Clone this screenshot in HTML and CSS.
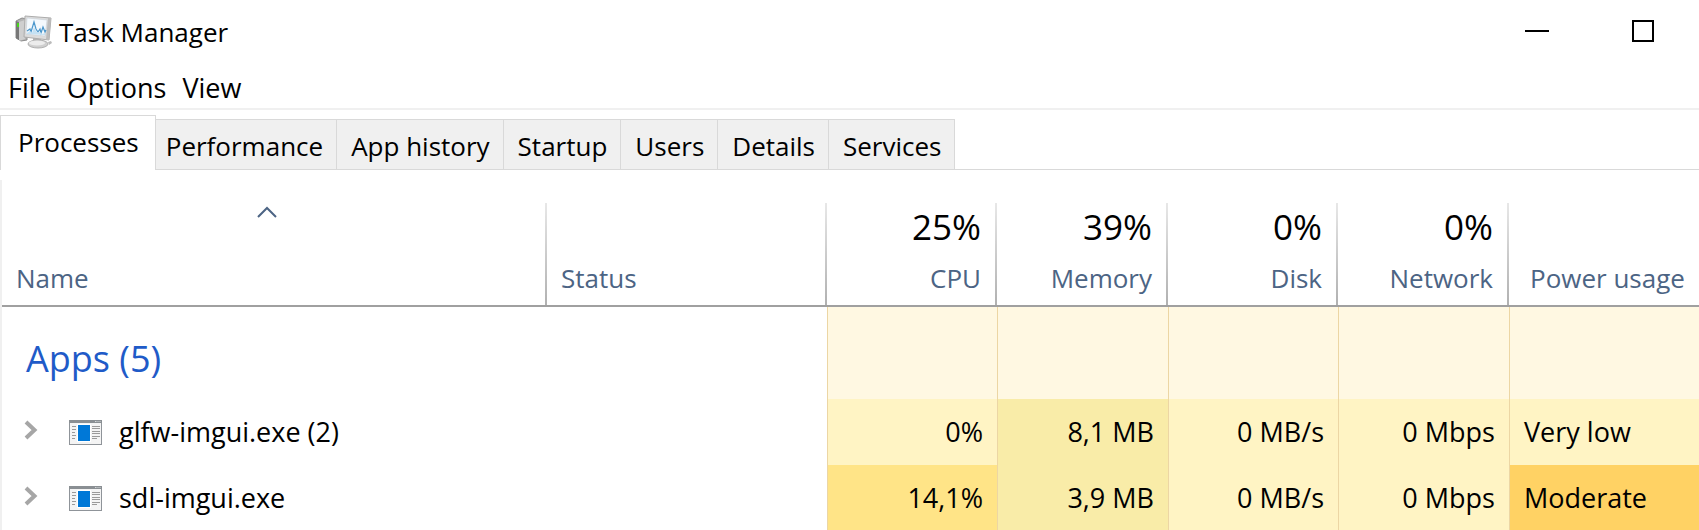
FILE: index.html
```html
<!DOCTYPE html>
<html lang="en">
<head>
<meta charset="utf-8">
<title>Task Manager</title>
<link rel="stylesheet" href="styles.css">
</head>
<body>
<svg class="defs" aria-hidden="true">
  <symbol id="app-icon" viewBox="0 0 33 25">
    <rect x="0.5" y="0.5" width="32" height="24" fill="#f4f4f4" stroke="#8f9499"/>
    <rect x="0" y="0" width="33" height="3" fill="#8a8f93"/>
    <path d="M26 1.5h1.500M28.500 1.500h1M30.500 1.500h1" stroke="#d5d8da"/>
    <rect x="8" y="4" width="14" height="18" fill="#fff"/>
    <rect x="9" y="5" width="12" height="16" fill="#0078d7"/>
    <path d="M3 6.500h4M3 9.500h4M3 12.500h3M3 15.500h4M3 18.500h3M23 6.500h8M23 8.500h8M23 11.500h8M23 13.500h8M23 16.500h8M23 18.500h5" stroke="#9a9a9a"/>
  </symbol>
  <symbol id="chevron" viewBox="0 0 14 20">
    <path d="M2 2l8.500 8L2 18" fill="none" stroke="#a6a6a6" stroke-width="4"/>
  </symbol>
</svg>
<header class="titlebar">
  <svg class="logo" viewBox="0 0 38 34" aria-hidden="true">
    <path d="M1 6l6-3 5 1v21l-6 1-5-3z" fill="#b5b5b5" stroke="#8c8c8c"/>
    <path d="M1 6l3 1v18l-3-2z" fill="#777"/>
    <path d="M4 7l6-2v19l-6 2z" fill="#cfcfcf"/>
    <rect x="2" y="8" width="2" height="4" fill="#49d31f"/>
    <path d="M18 22l8 1 1 6-9-1z" fill="#b4b4b4"/>
    <ellipse cx="23" cy="29" rx="10" ry="4" fill="#cfcfcf" stroke="#b0b0b0"/>
    <ellipse cx="22" cy="28" rx="8" ry="2.500" fill="#ececec"/>
    <path d="M33 27l3-1 1 2-3 2z" fill="#bbb"/>
    <path d="M10 1l26 2-2 22-25-3z" fill="#dcdcdc" stroke="#adadad"/>
    <path d="M33 3l3 0-2 22-3-1z" fill="#bcbcbc"/>
    <path d="M12 3l20 2-2 16-19-2z" fill="#f4f9fd" stroke="#c2cbd2" stroke-width=".5"/>
    <path d="M12 16l3-2 1 3 3-10 2 7 2 3 2-3 1 4 2-6 2 5 1-2" fill="none" stroke="#4b97cc" stroke-width="1.200"/>
    <path d="M12 18l3-2 2 2 2-6 2 4 2 2 2-1 2 2 3-1v2l-18-1z" fill="#c5e1f3"/>
  </svg>
  <h1 class="title">Task Manager</h1>
  <div class="controls">
    <button class="control" aria-label="Minimize"><svg width="24" height="24" viewBox="0 0 24 24"><path d="M0 12h24" stroke="#000" stroke-width="2"/></svg></button>
    <button class="control" aria-label="Maximize"><svg width="24" height="24" viewBox="0 0 24 24"><path d="M2 2h20v20H2z" fill="none" stroke="#000" stroke-width="2"/></svg></button>
  </div>
</header>
<nav class="menu">
  <button class="menu-item">File</button>
  <button class="menu-item">Options</button>
  <button class="menu-item">View</button>
</nav>
<div class="tabs" role="tablist">
  <button class="tab active" role="tab" aria-selected="true">Processes</button>
  <button class="tab first" role="tab">Performance</button>
  <button class="tab" role="tab">App history</button>
  <button class="tab" role="tab">Startup</button>
  <button class="tab" role="tab">Users</button>
  <button class="tab" role="tab">Details</button>
  <button class="tab" role="tab">Services</button>
</div>
<main class="panel">
  <table class="processes">
    <colgroup><col><col class="col-status"><col class="col-metric"><col class="col-metric-wide"><col class="col-metric"><col class="col-metric-wide"><col class="col-power"></colgroup>
    <thead>
      <tr>
        <th scope="col" aria-sort="ascending"><div class="head"><svg class="sort" viewBox="0 0 20 12" aria-hidden="true"><path d="M1 11l9-9 9 9" fill="none" stroke="#4c6484" stroke-width="2"/></svg><span class="label">Name</span></div></th>
        <th scope="col"><div class="head"><span class="label">Status</span></div></th>
        <th scope="col" class="metric"><div class="head"><span class="total">25%</span><span class="label">CPU</span></div></th>
        <th scope="col" class="metric"><div class="head"><span class="total">39%</span><span class="label">Memory</span></div></th>
        <th scope="col" class="metric"><div class="head"><span class="total">0%</span><span class="label">Disk</span></div></th>
        <th scope="col" class="metric"><div class="head"><span class="total">0%</span><span class="label">Network</span></div></th>
        <th scope="col"><div class="head power"><span class="label">Power usage</span></div></th>
      </tr>
    </thead>
    <tbody>
      <tr class="group">
        <th scope="rowgroup">Apps (5)</th><td></td>
        <td class="heat none"></td><td class="heat none"></td><td class="heat none"></td><td class="heat none"></td><td class="heat none"></td>
      </tr>
      <tr class="process">
        <td><div class="name"><button class="expand" aria-label="Expand glfw-imgui.exe"><svg width="14" height="20"><use href="#chevron"/></svg></button><svg class="app" width="33" height="25"><use href="#app-icon"/></svg><span>glfw-imgui.exe (2)</span></div></td>
        <td></td>
        <td class="heat low">0%</td><td class="heat memory">8,1 MB</td><td class="heat low">0 MB/s</td><td class="heat low">0 Mbps</td><td class="heat low level">Very low</td>
      </tr>
      <tr class="process">
        <td><div class="name"><button class="expand" aria-label="Expand sdl-imgui.exe"><svg width="14" height="20"><use href="#chevron"/></svg></button><svg class="app" width="33" height="25"><use href="#app-icon"/></svg><span>sdl-imgui.exe</span></div></td>
        <td></td>
        <td class="heat medium">14,1%</td><td class="heat memory">3,9 MB</td><td class="heat low">0 MB/s</td><td class="heat low">0 Mbps</td><td class="heat high level">Moderate</td>
      </tr>
    </tbody>
  </table>
</main>
</body>
</html>
```
FILE: styles.css
```css
* { box-sizing: border-box; }

body {
  margin: 0;
  background: #fff;
  color: #000;
  font: 26px/36px "Open Sans", "Noto Sans", sans-serif;
}

button {
  margin: 0;
  padding: 0;
  border: 0;
  background: none;
  color: inherit;
  font: inherit;
}

.defs {
  position: absolute;
  width: 0;
  height: 0;
}

.titlebar {
  display: flex;
  align-items: center;
  height: 64px;
  padding-left: 15px;
}

.logo {
  width: 38px;
  height: 34px;
  margin-right: 6px;
}

.title {
  margin: 0;
  font-size: 26px;
  font-weight: 400;
}

.controls {
  display: flex;
  align-self: stretch;
  margin: 0 3px 0 auto;
}

.control {
  display: grid;
  place-items: center;
  width: 106px;
  height: 61px;
}

.control svg { display: block; }

.menu {
  display: flex;
  gap: 16px;
  height: 46px;
  padding: 6px 8px 0;
  border-bottom: 2px solid #f0f0f0;
  font-size: 27px;
}

.menu-item { height: 36px; }

.tabs {
  display: flex;
  align-items: flex-end;
  height: 60px;
  padding-top: 5px;
  border-bottom: 1px solid #d9d9d9;
}

.tab {
  height: 50px;
  padding: 3px 13px 0 14px;
  border: solid #d9d9d9;
  border-width: 1px 1px 0 0;
  background: #f0f0f0;
}

.tab.first { padding-left: 10px; }

.tab.active {
  height: 55px;
  margin-bottom: -1px;
  padding: 0 16px 2px 17px;
  border-left-width: 1px;
  background: #fff;
}

.panel {
  margin-top: 10px;
  border-left: 2px solid #f0f0f0;
}

.processes {
  width: 100%;
  border-spacing: 0;
  table-layout: fixed;
}

.col-status { width: 280px; }
.col-metric { width: 170px; }
.col-metric-wide { width: 171px; }
.col-power { width: 190px; }

.processes th,
.processes td {
  padding: 0;
  font-weight: 400;
  text-align: left;
}

.processes thead th {
  padding-top: 23px;
  border-bottom: 2px solid #a0a0a0;
  color: #4c6484;
}

.head {
  display: flex;
  flex-direction: column;
  justify-content: flex-end;
  height: 102px;
  padding: 0 14px 9px;
  border-right: 2px solid;
  border-image: linear-gradient(#e8e8e8, #b0b0b0) 1;
}

.head.power {
  padding-left: 21px;
  padding-right: 0;
  border: 0;
}

.metric .head {
  align-items: flex-end;
  padding-right: 14px;
}

.total {
  margin-bottom: 13px;
  color: #000;
  font-size: 35px;
  line-height: 40px;
}

.sort {
  width: 20px;
  height: 12px;
  align-self: center;
  margin: 3px 14px auto 0;
}

.processes .group th {
  height: 92px;
  padding: 12px 0 0 24px;
  color: #1f5bc8;
  font-size: 36px;
}

.processes .heat {
  border-left: 1px solid #ecd6a4;
  text-align: right;
}

.processes .process td {
  height: 66px;
  font-size: 27px;
}

.processes .process .heat { padding: 0 14px; }

.processes .process .level { text-align: left; }

.none { background: #fff8e2; }
.low { background: #fff4c4; }
.memory { background: #f9eca8; }
.medium { background: #ffe487; }
.high { background: #ffd264; }

.name {
  display: flex;
  align-items: center;
  padding-left: 22px;
}

.expand {
  padding-bottom: 4px;
}

.expand svg { display: block; }

.app { margin: 0 17px 0 31px; }
```
